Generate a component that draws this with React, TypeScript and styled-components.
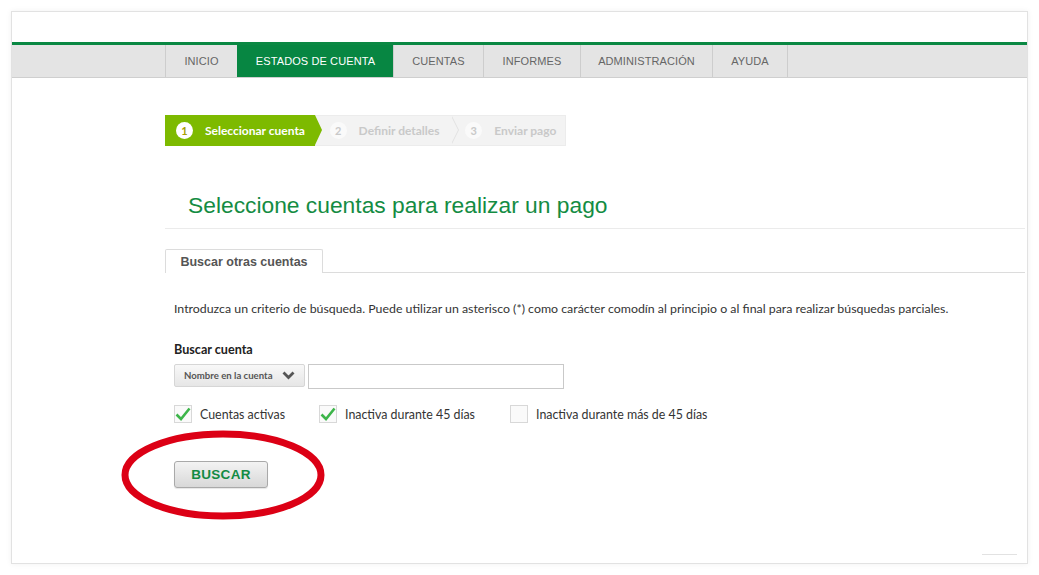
import React from "react";
import styled, { createGlobalStyle } from "styled-components";

const Global = createGlobalStyle`
  html, body { margin: 0; padding: 0; background: #fff; }
  body { font-family: "Liberation Sans", Arial, sans-serif; }
  * { box-sizing: border-box; }
`;

const Stage = styled.div`
  position: relative;
  width: 1039px;
  height: 575px;
  padding: 11px 12px 0 11px;
`;

const Frame = styled.div`
  width: 1017px;
  height: 553px;
  border: 1px solid #e2e2e2;
  box-shadow: 0 0 6px rgba(0, 0, 0, 0.06);
  background: #fff;
  position: relative;
`;

const TopSpace = styled.div`
  height: 33px;
  border-bottom: 3px solid #0a8843;
`;

const NavBar = styled.nav`
  height: 33px;
  background: #e4e4e4;
  border-bottom: 1px solid #cfcfcf;
  display: flex;
  padding-left: 153px;
`;

const NavItem = styled.div<{ $active?: boolean; $w: number }>`
  width: ${(p) => p.$w}px;
  display: flex;
  align-items: center;
  justify-content: center;
  font-size: 11px;
  letter-spacing: 0.1px;
  color: ${(p) => (p.$active ? "#fff" : "#666")};
  background: ${(p) => (p.$active ? "#078642" : "transparent")};
  border-left: 1px solid ${(p) => (p.$active ? "#078642" : "#cdcdcd")};
  &:last-child { border-right: 1px solid #cdcdcd; }
`;

const Content = styled.div`
  padding: 37px 2px 0 153px;
`;

const Stepper = styled.div`
  display: flex;
  width: 401px;
  height: 31px;
  background: #f3f3f3;
  border: 1px solid #ececec;
  border-left: none;
`;

const Step = styled.div<{ $active?: boolean; $last?: boolean; $w: number; $pl: number }>`
  position: relative;
  width: ${(p) => p.$w}px;
  display: flex;
  align-items: center;
  padding-left: ${(p) => p.$pl}px;
  gap: 12px;
  background: ${(p) => (p.$active ? "#7dba00" : "transparent")};
  font-family: "Lato", "Noto Sans", sans-serif;
  font-weight: 700;
  font-size: 12px;
  color: ${(p) => (p.$active ? "#fff" : "#c9c9c9")};
  margin-top: ${(p) => (p.$active ? "-1px" : "0")};
  margin-bottom: ${(p) => (p.$active ? "-1px" : "0")};
  &::after {
    content: "";
    position: absolute;
    right: -7px;
    top: 0;
    width: 0;
    height: 0;
    border-top: ${(p) => (p.$active ? 15.5 : 14.5)}px solid transparent;
    border-bottom: ${(p) => (p.$active ? 15.5 : 14.5)}px solid transparent;
    border-left: 7px solid ${(p) => (p.$active ? "#7dba00" : "#f3f3f3")};
    z-index: 2;
    display: ${(p) => (p.$last ? "none" : "block")};
  }
  &::before {
    content: "";
    position: absolute;
    right: -8px;
    top: 0;
    width: 0;
    height: 0;
    border-top: 14.5px solid transparent;
    border-bottom: 14.5px solid transparent;
    border-left: 7px solid #e2e2e2;
    z-index: 1;
    display: ${(p) => (p.$active || p.$last ? "none" : "block")};
  }
`;

const StepNum = styled.span<{ $active?: boolean }>`
  width: 17px;
  height: 17px;
  border-radius: 50%;
  background: ${(p) => (p.$active ? "#fff" : "#fafafa")};
  color: ${(p) => (p.$active ? "#a7a000" : "#c9c9c9")};
  display: flex;
  align-items: center;
  justify-content: center;
  font-size: 11px;
  font-weight: 700;
`;

const Title = styled.h1`
  margin: 46px 0 0 0;
  padding: 0 0 9px 23px;
  font-family: "Liberation Sans", Arial, sans-serif;
  font-weight: 400;
  font-size: 22.8px;
  color: #148c43;
  border-bottom: 1px solid #ebebeb;
`;

const TabRow = styled.div`
  display: flex;
  margin-top: 20px;
`;

const Tab = styled.div`
  width: 158px;
  height: 24px;
  border: 1px solid #dcdcdc;
  border-bottom: none;
  border-radius: 2px 2px 0 0;
  display: flex;
  align-items: center;
  justify-content: center;
  font-size: 12.5px;
  font-weight: 700;
  color: #555;
`;

const TabLine = styled.div`
  flex: 1;
  border-bottom: 1px solid #dcdcdc;
`;

const Panel = styled.div`
  padding: 28px 0 0 9px;
  font-family: "Lato", "Noto Sans", sans-serif;
  color: #333;
`;

const Intro = styled.p`
  margin: 0;
  font-size: 12.35px;
  line-height: 16px;
`;

const Label = styled.div`
  margin-top: 25px;
  font-weight: 700;
  font-size: 12.6px;
  color: #222;
`;

const SearchRow = styled.div`
  display: flex;
  gap: 3px;
  margin-top: 7px;
`;

const Select = styled.div`
  width: 131px;
  height: 23px;
  border: 1px solid #d6d6d6;
  border-radius: 2px;
  background: linear-gradient(#f8f8f8, #e6e6e6);
  display: flex;
  align-items: center;
  padding-left: 9px;
  gap: 9px;
  font-size: 9.6px;
  font-weight: 700;
  color: #555;
`;

const Input = styled.div`
  width: 256px;
  height: 25px;
  border: 1px solid #c9c9c9;
  background: #fff;
`;

const Checks = styled.div`
  display: flex;
  align-items: center;
  margin-top: 16px;
`;

const CheckItem = styled.label<{ $w: number }>`
  width: ${(p) => p.$w}px;
  display: flex;
  align-items: center;
  gap: 8px;
  font-size: 12.4px;
  color: #333;
`;

const Box = styled.span`
  width: 18px;
  height: 18px;
  border: 1px solid #d8d8d8;
  background: #fafafa;
  display: flex;
  align-items: center;
  justify-content: center;
`;

const Button = styled.button`
  margin-top: 38px;
  width: 94px;
  height: 27px;
  border: 1px solid #a9a9a9;
  border-radius: 3px;
  background: linear-gradient(#f3f3f3, #d8d8d8);
  box-shadow: 0 1px 1px rgba(0, 0, 0, 0.1);
  font-family: "Liberation Sans", Arial, sans-serif;
  font-weight: 700;
  font-size: 13.5px;
  color: #138b44;
  letter-spacing: 0.3px;
`;

const Ellipse = styled.svg`
  position: absolute;
  left: 120px;
  top: 429px;
`;

const CornerLine = styled.div`
  position: absolute;
  right: 10px;
  bottom: 8px;
  width: 35px;
  height: 1px;
  background: #e2e2e2;
`;

const Check = () => (
  <svg width="16" height="14" viewBox="0 0 16 14">
    <path d="M1.5 7.5 L6 12 L14.5 1.5" fill="none" stroke="#3db54a" strokeWidth="2.6" strokeLinejoin="miter" />
  </svg>
);

const Chevron = () => (
  <svg width="13" height="9" viewBox="0 0 13 9">
    <path d="M1.5 1.5 L6.5 6.5 L11.5 1.5" fill="none" stroke="#555" strokeWidth="2.8" />
  </svg>
);

const navItems: [string, number, boolean?][] = [
  ["INICIO", 72],
  ["ESTADOS DE CUENTA", 156, true],
  ["CUENTAS", 90],
  ["INFORMES", 97],
  ["ADMINISTRACIÓN", 132],
  ["AYUDA", 76],
];

export default function App() {
  return (
    <Stage>
      <Global />
      <Frame>
        <TopSpace />
        <NavBar>
          {navItems.map(([t, w, a]) => (
            <NavItem key={t} $w={w} $active={a}>
              {t}
            </NavItem>
          ))}
        </NavBar>
        <Content>
          <Stepper>
            <Step $active $w={150} $pl={11}>
              <StepNum $active>1</StepNum>
              Seleccionar cuenta
            </Step>
            <Step $w={137} $pl={15}>
              <StepNum>2</StepNum>
              Definir detalles
            </Step>
            <Step $w={114} $last $pl={14}>
              <StepNum>3</StepNum>
              Enviar pago
            </Step>
          </Stepper>
          <Title>Seleccione cuentas para realizar un pago</Title>
          <TabRow>
            <Tab>Buscar otras cuentas</Tab>
            <TabLine />
          </TabRow>
          <Panel>
            <Intro>
              Introduzca un criterio de búsqueda. Puede utilizar un asterisco (*) como carácter comodín al principio o al final para realizar búsquedas parciales.
            </Intro>
            <Label>Buscar cuenta</Label>
            <SearchRow>
              <Select>
                Nombre en la cuenta
                <Chevron />
              </Select>
              <Input />
            </SearchRow>
            <Checks>
              <CheckItem $w={145}>
                <Box>
                  <Check />
                </Box>
                Cuentas activas
              </CheckItem>
              <CheckItem $w={191}>
                <Box>
                  <Check />
                </Box>
                Inactiva durante 45 días
              </CheckItem>
              <CheckItem $w={220}>
                <Box />
                Inactiva durante más de 45 días
              </CheckItem>
            </Checks>
            <Button>BUSCAR</Button>
          </Panel>
        </Content>
        <CornerLine />
      </Frame>
      <Ellipse width="206" height="92" viewBox="0 0 206 92">
        <ellipse cx="103" cy="46" rx="98" ry="41" fill="none" stroke="#dc0015" strokeWidth="7" />
      </Ellipse>
    </Stage>
  );
}
